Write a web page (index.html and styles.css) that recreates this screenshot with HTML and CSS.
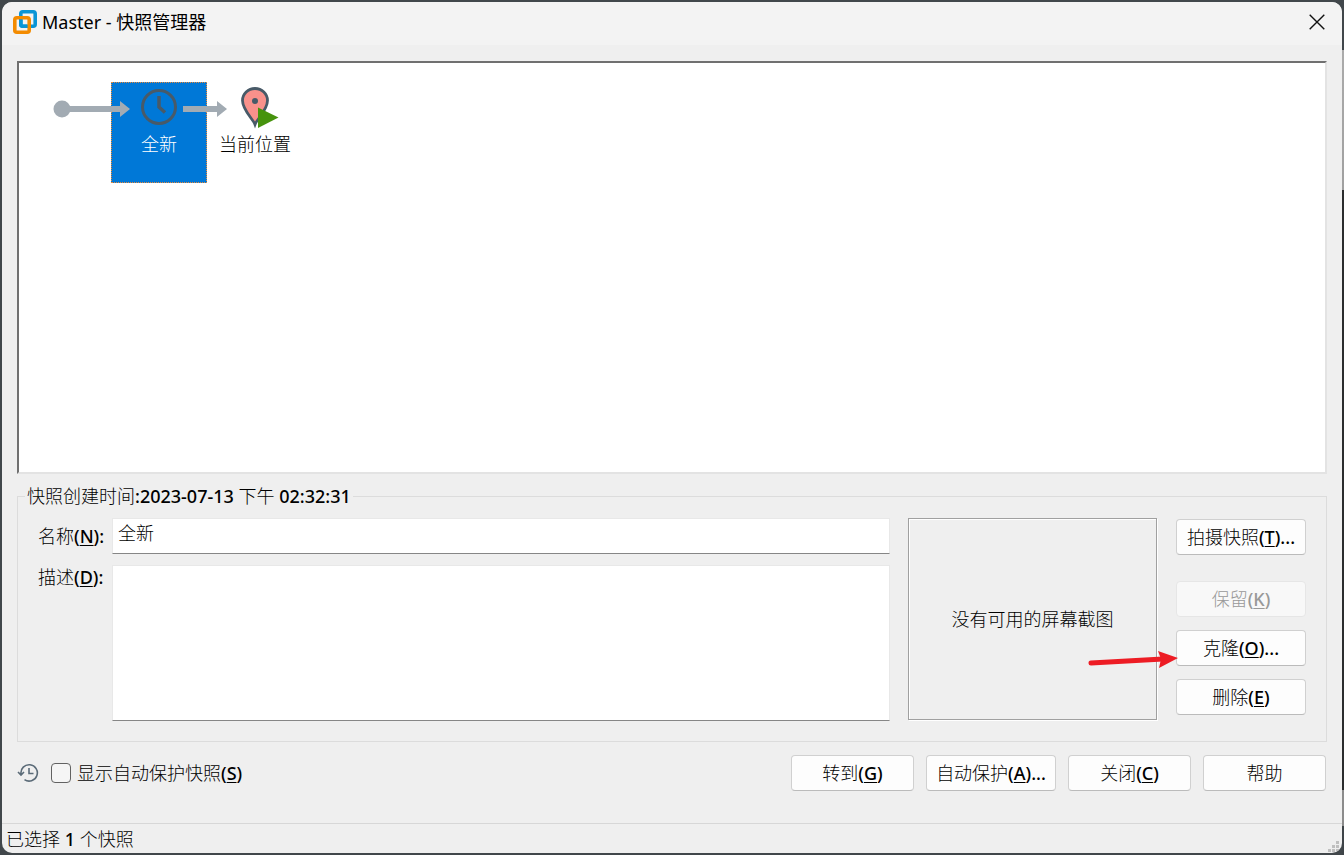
FILE: index.html
```
<!DOCTYPE html>
<html lang="zh-CN">
<head>
    <meta charset="UTF-8">
    <meta name="viewport" content="width=device-width, initial-scale=1.0">
    <title>Master - 快照管理器</title>
    <link rel="stylesheet" href="styles.css">
</head>
<body>
    <div class="window">
        <header class="title-bar">
            <svg class="logo" width="24" height="24" viewBox="0 0 24 24" fill="none" stroke-width="3.600">
                <rect x="7.800" y="1.800" width="14.400" height="14.400" rx="2" stroke="#0a95d6"/>
                <rect x="1.800" y="7.800" width="14.400" height="14.400" rx="2" stroke="#f38b00"/>
                <path d="M7.800 9.500v4.700q0 2 2 2h4.500" stroke="#0a95d6"/>
            </svg>
            <h1>Master - 快照管理器</h1>
            <button class="close" type="button" aria-label="关闭窗口">
                <svg width="16" height="16" viewBox="0 0 16 16" stroke="#111" stroke-width="1.4"><path d="M.7.7l14.6 14.6M15.3.7L.7 15.3"/></svg>
            </button>
        </header>

        <main>
            <div class="tree">
                <div class="node selected">
                    <svg width="40" height="42" viewBox="0 0 40 42" fill="none" stroke="#485a68">
                        <circle cx="20" cy="21" r="16.5" stroke-width="3"/>
                        <path d="M20 10v11l6 5.500" stroke-width="3.500"/>
                    </svg>
                    <span>全新</span>
                </div>
                <div class="node">
                    <svg width="40" height="42" viewBox="0 0 40 42">
                        <path d="M20 38.500C18 33 7.500 24 7.500 14.500a12.500 12 0 0 1 25 0C32.500 24 22 33 20 38.500z" fill="#f9918b" stroke="#485a68" stroke-width="2.800"/>
                        <circle cx="20" cy="15" r="3" fill="#485a68"/>
                        <path d="M23 21.500L43.500 31.500L23 42z" fill="#46930d"/>
                    </svg>
                    <span>当前位置</span>
                </div>
                <svg class="links" width="180" height="20" viewBox="0 0 180 20" fill="#a2abb3">
                    <circle cx="10" cy="10" r="8.500"/>
                    <path d="M10 7h58V2l10 8-10 8v-5H10zM131 7h34V2l10 8-10 8v-5h-34z"/>
                </svg>
            </div>

            <fieldset>
                <legend>快照创建时间:2023-07-13 下午 02:32:31</legend>
                <div class="details">
                    <div class="fields">
                        <label for="name">名称(<u>N</u>):</label>
                        <input type="text" id="name" name="name" value="全新">
                        <label for="description">描述(<u>D</u>):</label>
                        <textarea id="description" name="description"></textarea>
                    </div>
                    <div class="preview">没有可用的屏幕截图</div>
                    <div class="actions">
                        <button class="take" type="button">拍摄快照(<u>T</u>)...</button>
                        <button type="button" disabled>保留(<u>K</u>)</button>
                        <div class="clone">
                            <button type="button">克隆(<u>O</u>)...</button>
                            <svg class="pointer" width="92" height="20" viewBox="0 0 92 20">
                                <path d="M4 13L76 9" stroke="#ed1c24" stroke-width="5" stroke-linecap="round"/>
                                <path d="M71 1L91 8L72 18L74 9z" fill="#ed1c24"/>
                            </svg>
                        </div>
                        <button type="button">删除(<u>E</u>)</button>
                    </div>
                </div>
            </fieldset>

            <div class="bottom">
                <svg width="22" height="20" viewBox="0 0 22 20" fill="none" stroke="#5b6b78" stroke-width="1.600">
                    <path d="M4 11A8.200 8.200 0 1 1 7.500 16.700M1 9l3 3 3-3M12 5v5.500h4.500"/>
                </svg>
                <input type="checkbox" id="autoProtect">
                <label for="autoProtect">显示自动保护快照(<u>S</u>)</label>
                <div class="buttons">
                    <button type="button">转到(<u>G</u>)</button>
                    <button class="wide" type="button">自动保护(<u>A</u>)...</button>
                    <button type="button">关闭(<u>C</u>)</button>
                    <button type="button">帮助</button>
                </div>
            </div>
        </main>

        <footer class="status">
            <span>已选择 1 个快照</span>
            <svg width="12" height="12" viewBox="0 0 12 12" fill="#bfbfbf">
                <path d="M8 0h3v3H8zM4 4h3v3H4zM8 4h3v3H8zM0 8h3v3H0zM4 8h3v3H4zM8 8h3v3H8z"/>
            </svg>
        </footer>
    </div>
</body>
</html>
```
FILE: styles.css
```
* {
    box-sizing: border-box;
}

body {
    margin: 0;
    padding: 2px;
    min-height: 100vh;
    display: flex;
    background: linear-gradient(#41474b 50px, #ababab 50px, #a0a0a0 190px, #2b2d2e 190px, #2b2d2e 790px, #8c8c8c 790px, #8c8c8c 826px, #3e4448 826px) right / 2px 100% no-repeat, #41474b;
}

body, button, input, textarea {
    font-family: "Noto Sans", "Noto Sans CJK SC Light", "Noto Sans CJK SC", sans-serif;
    font-size: 18px;
    font-weight: 500;
    line-height: 24px;
    color: #000;
}

.window {
    flex: 1;
    display: flex;
    flex-direction: column;
    background: #efefef;
    border-radius: 10px;
    overflow: hidden;
}

/* Title bar */
.title-bar {
    display: flex;
    align-items: center;
    height: 43px;
    padding: 0 16px 3px 11px;
    background: #f3f3f3;
}

h1 {
    flex: 1;
    margin: 0 0 0 5px;
    font-family: "Noto Sans", "Noto Sans CJK SC", sans-serif;
    font-size: 18px;
    font-weight: normal;
}

.close {
    width: 18px;
    height: 18px;
    padding: 1px;
    border: none;
    background: none;
    display: flex;
}

main {
    flex: 1;
    display: flex;
    flex-direction: column;
    padding: 16px 15px 32px;
}

/* Snapshot tree */
.tree {
    position: relative;
    flex: 1;
    display: flex;
    padding: 19px 92px;
    background: #fff;
    border: 2px solid;
    border-color: #707070 #e3e3e3 #e3e3e3 #707070;
}

.node {
    width: 96px;
    height: 101px;
    padding-top: 3px;
    display: flex;
    flex-direction: column;
    align-items: center;
    border: 1px solid transparent;
}

.node svg {
    flex: none;
    overflow: visible;
}

.node span {
    margin-top: 4px;
}

.selected {
    background: #0078d7;
    border: 1px dotted #e98a3a;
    color: #fff;
}

.links {
    position: absolute;
    left: 33px;
    top: 36px;
}

/* Snapshot details */
fieldset {
    margin: 10px 0 13px;
    padding: 10px 20px 20px;
    border: 1px solid #dcdcdc;
}

legend {
    padding: 0 2px;
    margin-left: -13px;
}

.details {
    display: flex;
}

.fields {
    flex: 1;
    display: grid;
    grid-template-columns: auto 1fr;
    grid-template-rows: 36px 156px;
    gap: 11px 8px;
}

.fields label {
    padding-top: 6px;
}

.fields label[for="description"] {
    padding-top: 0;
}

input[type="text"], textarea {
    width: 100%;
    margin: 0;
    padding: 0 5px 7px;
    background: #fff;
    border: 1px solid #e8e8e8;
    border-bottom-color: #868686;
    border-radius: 0;
    resize: none;
    outline: none;
}

.preview {
    width: 249px;
    height: 202px;
    margin: 0 19px 0 18px;
    display: flex;
    align-items: center;
    justify-content: center;
    border: 1px solid #a0a0a0;
    box-shadow: 1px 1px 0 #fff, inset 1px 1px 0 #fff;
}

.actions {
    width: 130px;
    padding-top: 1px;
    display: flex;
    flex-direction: column;
    gap: 13px;
}

.actions button, .buttons button {
    height: 36px;
    padding: 0;
    background: #fdfdfd;
    border: 1px solid #d0d0d0;
    border-bottom-color: #bbb;
    border-radius: 4px;
}

.actions button {
    width: 100%;
}

.actions .take {
    margin-bottom: 13px;
}

.actions button:disabled {
    color: #999;
    background: #f8f8f8;
    border-color: #e6e6e6;
}

.clone {
    position: relative;
    display: flex;
}

.pointer {
    position: absolute;
    left: -89px;
    top: 20px;
}

u {
    text-underline-offset: 2px;
    text-decoration-thickness: 1px;
}

/* Bottom row */
.bottom {
    display: flex;
    align-items: center;
}

.bottom input {
    appearance: none;
    width: 20px;
    height: 20px;
    margin: 0 6px 0 12px;
    border: 1px solid #626262;
    border-radius: 4px;
    background: #f5f5f5;
}

.buttons {
    margin-left: auto;
    display: flex;
    gap: 12px;
    padding-right: 1px;
}

.buttons button {
    width: 123px;
}

.buttons .wide {
    width: 130px;
}

.status {
    display: flex;
    align-items: center;
    justify-content: space-between;
    height: 30px;
    padding: 0 2px 0 4px;
    border-top: 1px solid #d7d7d7;
}

.status svg {
    align-self: flex-end;
}
```
